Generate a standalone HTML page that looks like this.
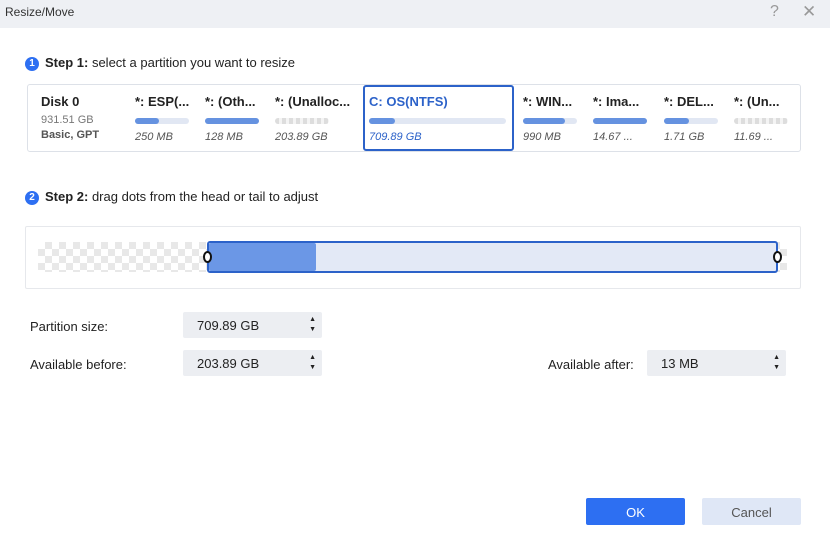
<!DOCTYPE html><html><head><style>
body{margin:0;width:830px;height:550px;background:#fff;font-family:"Liberation Sans",sans-serif;position:relative;overflow:hidden;color:#222}
.a{position:absolute}
.t{font-size:13px}
.bar{position:absolute;height:6px;border-radius:3px;background:#e1e7f3;width:54px;top:118px}
.bar i{display:block;height:6px;border-radius:3px;background:#6592e0}
.dash{background:repeating-linear-gradient(90deg,#ddd 0 4px,#f4f4f4 4px 7px)}
.nm{position:absolute;top:94px;font-size:13px;font-weight:bold;color:#222}
.sz{position:absolute;top:131px;font-size:11px;font-style:italic;color:#555}
.spin{position:absolute;background:#eceef2;border-radius:2px;height:26px;width:139px;font-size:13px;line-height:28px;padding-left:14px;box-sizing:border-box}
.spin:after{content:"▲\A▼";white-space:pre;position:absolute;right:6px;top:3px;font-size:7px;line-height:10px;color:#222}
.num{display:inline-block;width:14px;height:14px;border-radius:7px;background:#2d6ff2;color:#fff;font-size:10px;text-align:center;line-height:14px;font-weight:bold;vertical-align:1px;margin-right:6px}
</style></head><body>
<div class="a" style="left:0;top:0;width:830px;height:28px;background:#eef0f4"></div>
<div class="a t" style="left:5px;top:5px;font-size:12px;color:#333">Resize/Move</div>
<div class="a" style="left:770px;top:3px;font-size:16px;color:#999">?</div>
<div class="a" style="left:802px;top:2px;font-size:17px;color:#999">✕</div>
<div class="a t" style="left:25px;top:55px"><span class="num">1</span><b>Step 1:</b> select a partition you want to resize</div>
<div class="a" style="left:27px;top:84px;width:772px;height:66px;border:1px solid #dde1e8;border-radius:3px"></div>
<div class="a" style="left:363px;top:85px;width:147px;height:62px;border:2px solid #2c62c9;border-radius:3px"></div>
<div class="nm" style="left:41px">Disk 0</div>
<div class="a" style="left:41px;top:114px;font-size:11px;color:#777">931.51 GB</div>
<div class="a" style="left:41px;top:129px;font-size:11px;color:#555;font-weight:bold">Basic, GPT</div>
<div class="nm" style="left:135px">*: ESP(...</div><div class="bar" style="left:135px"><i style="width:24px"></i></div><div class="sz" style="left:135px">250 MB</div>
<div class="nm" style="left:205px">*: (Oth...</div><div class="bar" style="left:205px"><i style="width:54px"></i></div><div class="sz" style="left:205px">128 MB</div>
<div class="nm" style="left:275px">*: (Unalloc...</div><div class="bar dash" style="left:275px"></div><div class="sz" style="left:275px">203.89 GB</div>
<div class="nm" style="left:369px;color:#2c62c9">C: OS(NTFS)</div><div class="bar" style="left:369px;width:137px"><i style="width:26px"></i></div><div class="sz" style="left:369px;color:#2c62c9">709.89 GB</div>
<div class="nm" style="left:523px">*: WIN...</div><div class="bar" style="left:523px"><i style="width:42px"></i></div><div class="sz" style="left:523px">990 MB</div>
<div class="nm" style="left:593px">*: Ima...</div><div class="bar" style="left:593px"><i style="width:54px"></i></div><div class="sz" style="left:593px">14.67 ...</div>
<div class="nm" style="left:664px">*: DEL...</div><div class="bar" style="left:664px"><i style="width:25px"></i></div><div class="sz" style="left:664px">1.71 GB</div>
<div class="nm" style="left:734px">*: (Un...</div><div class="bar dash" style="left:734px"></div><div class="sz" style="left:734px">11.69 ...</div>
<div class="a t" style="left:25px;top:189px"><span class="num">2</span><b>Step 2:</b> drag dots from the head or tail to adjust</div>
<div class="a" style="left:25px;top:226px;width:774px;height:61px;border:1px solid #e6e8ec;border-radius:2px"></div>
<div class="a" style="left:38px;top:242px;width:749px;height:30px;background-color:#fff;background-image:linear-gradient(45deg,#e8e8e8 25%,transparent 25%,transparent 75%,#e8e8e8 75%),linear-gradient(45deg,#e8e8e8 25%,transparent 25%,transparent 75%,#e8e8e8 75%);background-size:14px 14px;background-position:0 0,7px 7px"></div>
<div class="a" style="left:207px;top:241px;width:567px;height:28px;border:2px solid #2c62c9;border-radius:3px;background:#e3e9f6"></div>
<div class="a" style="left:209px;top:243px;width:107px;height:28px;background:#6b97e6;border-radius:2px"></div>
<div class="a" style="left:203px;top:251px;width:5px;height:8px;border:2px solid #111;border-radius:50%;background:#fff"></div>
<div class="a" style="left:773px;top:251px;width:5px;height:8px;border:2px solid #111;border-radius:50%;background:#fff"></div>
<div class="a t" style="left:30px;top:319px">Partition size:</div>
<div class="spin" style="left:183px;top:312px">709.89 GB</div>
<div class="a t" style="left:30px;top:357px">Available before:</div>
<div class="spin" style="left:183px;top:350px">203.89 GB</div>
<div class="a t" style="left:548px;top:357px">Available after:</div>
<div class="spin" style="left:647px;top:350px">13 MB</div>
<div class="a" style="left:586px;top:498px;width:99px;height:27px;background:#2d6ff2;color:#fff;font-size:13px;text-align:center;line-height:29px;border-radius:2px">OK</div>
<div class="a" style="left:702px;top:498px;width:99px;height:27px;background:#dfe7f6;color:#555;font-size:13px;text-align:center;line-height:29px;border-radius:2px">Cancel</div>
</body></html>
